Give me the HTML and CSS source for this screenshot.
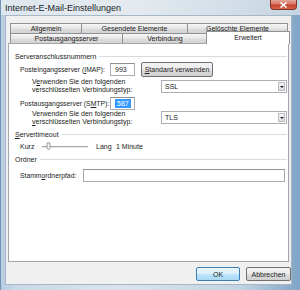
FILE: index.html
```html
<!DOCTYPE html>
<html lang="de">
<head>
  <meta charset="UTF-8">
  <title>Internet-E-Mail-Einstellungen</title>
  <link rel="stylesheet" href="styles.css">
</head>
<body>
  <div class="window">
    <div class="titlebar">
      <span class="title">Internet-E-Mail-Einstellungen</span>
      <span class="close">
        <svg width="9" height="6" viewBox="0 0 9 6"><path d="M1.5 0.5 L7.5 5.5 M7.5 0.5 L1.5 5.5" stroke="#fff" stroke-width="1.6"/></svg>
      </span>
    </div>

    <div class="client">
      <div class="tabs">
        <div class="tabrow">
          <div class="tab t-allg">Allgemein</div>
          <div class="tab t-ges">Gesendete Elemente</div>
          <div class="tab t-gel">Gelöschte Elemente</div>
        </div>
        <div class="tabrow">
          <div class="tab t-post">Postausgangsserver</div>
          <div class="tab t-verb">Verbindung</div>
          <div class="tab t-erw active">Erweitert</div>
        </div>
      </div>

      <div class="panel">
        <div class="group">Serveranschlussnummern</div>

        <div class="row r-imap">
          <span class="lbl">Posteingangsserver (<u>I</u>MAP):</span>
          <span class="field port">993</span>
          <span class="btn std"><u>S</u>tandard verwenden</span>
        </div>

        <div class="row r-enc r-enc1">
          <span class="enc-text">V<u>e</u>rwenden Sie den folgenden<br>verschlüsselten Verbindungstyp:</span>
          <span class="combo">SSL<span class="drop"></span></span>
        </div>

        <div class="row r-smtp">
          <span class="lbl">Postausgangsserver (S<u>M</u>TP):</span>
          <span class="field port"><span class="sel">587</span></span>
        </div>

        <div class="row r-enc r-enc2">
          <span class="enc-text">Verwenden Sie den folgenden<br><u>v</u>erschlüsselten Verbindungstyp:</span>
          <span class="combo">TLS<span class="drop"></span></span>
        </div>

        <div class="group g-timeout"><span><u>S</u>ervertimeout</span></div>

        <div class="row r-timeout">
          <span class="kurz">Kurz</span>
          <svg class="slider" width="46" height="9" viewBox="0 0 46 9">
            <rect x="0" y="4" width="46" height="1" fill="#a8a8a8"/>
            <rect x="0" y="5" width="46" height="1" fill="#e8e8e8"/>
            <path d="M5 1 L8 1 L8 6 L6.5 8 L5 6 Z" fill="#f4f4f4" stroke="#8a8a8a" stroke-width="0.8"/>
          </svg>
          <span class="lang">Lang</span>
          <span>1 Minute</span>
        </div>

        <div class="group g-ordner">Ordner</div>

        <div class="row r-stamm">
          <span class="lbl stamm-lbl">Stamm<u>o</u>rdnerpfad:</span>
          <span class="field path"></span>
        </div>
      </div>

      <div class="buttons">
        <span class="btn ok">OK</span>
        <span class="btn cancel">Abbrechen</span>
      </div>
    </div>
  </div>
</body>
</html>
```

FILE: styles.css
```css
body { margin: 0; font-family: "Liberation Sans", Arial, sans-serif; font-size: 7px; color: #1b1b1b; white-space: nowrap; }
u { text-decoration: underline; text-underline-offset: 1px; }

.window { width: 300px; height: 290px; display: flex; flex-direction: column; box-sizing: border-box; border-left: 1px solid #6f93b6; background: linear-gradient(to right, #b7cde0 0, #c9d9e7 5%, #dbe4ec 40%, #c3d4e3 80%, #7fa4c5 100%); }

/* title bar */
.titlebar { height: 15px; display: flex; align-items: flex-start; background: linear-gradient(to right, #dfe7ee 0, #e4eaef 45%, #c6d5e2 100%); }
.title { padding-left: 4px; line-height: 16px; font-size: 9px; color: #202428; }
.close { margin-left: auto; margin-right: 3px; width: 27px; height: 10px; box-sizing: border-box; display: flex; align-items: center; justify-content: center; border: 1px solid #7a3429; border-top: none; border-radius: 0 0 4px 4px; background: linear-gradient(#e3a596 0, #d77664 45%, #c4412a 55%, #d8664c 100%); }

/* client area */
.client { margin: 0 8px 5px 4px; flex: 1; display: flex; flex-direction: column; background: #f0f0f0; border: 1px solid #a5b6c6; }

.tabs { margin: 7px 0 0 4px; }
.tabrow { display: flex; height: 10px; align-items: flex-end; }
.tab { box-sizing: border-box; height: 10px; line-height: 9px; text-align: center; border: 1px solid #8e9196; border-bottom: none; margin-left: -1px; background: linear-gradient(#f6f6f6, #e6e6e6 50%, #dcdcdc 51%, #d4d4d4); }
.t-allg, .t-post { margin-left: 0; }
.t-allg { width: 72px; }
.t-ges { width: 107px; }
.t-gel { width: 101px; }
.t-post { width: 113px; }
.t-verb { width: 86px; }
.tab.active { width: 84px; height: 13px; margin-left: -2px; margin-top: -2px; margin-bottom: -1px; line-height: 11px; background: #fff; position: relative; z-index: 1; }

.panel { margin: 0 2px; height: 219px; box-sizing: border-box; border: 1px solid #a3a6ab; background: #fff; padding: 8px 1px 0 6px; }

.group { display: flex; align-items: center; height: 9px; line-height: 9px; }
.group::after { content: ""; flex: 1; margin-left: 3px; border-top: 1px solid #d5dde3; }
.g-timeout { margin-top: 4px; }
.g-ordner { margin-top: 4px; }

.row { display: flex; align-items: center; padding-left: 5px; }
.lbl { width: 90px; font-size: 6.8px; }
.field { box-sizing: border-box; height: 13px; border: 1px solid #abadb3; border-top-color: #8e9095; background: #fff; display: flex; align-items: center; padding-left: 4px; }
.port { width: 25px; }
.sel { background: #3399ff; color: #fff; padding: 0 2px; line-height: 9px; }

.btn { box-sizing: border-box; display: flex; align-items: center; justify-content: center; border: 1px solid #707070; border-radius: 2px; background: linear-gradient(#f3f3f3, #ebebeb 50%, #dddddd 51%, #cfcfcf); }
.std { width: 72px; height: 15px; margin-left: 6px; }

.r-imap { margin-top: 1px; }
.r-enc { align-items: flex-start; }
.enc-text { margin-left: 12px; line-height: 8px; }
.r-enc1 { margin-top: 1px; }
.r-enc1 .combo { margin-top: 2px; }
.r-enc2 .combo { margin-top: 1px; }
.r-smtp { margin-top: 3px; height: 13px; }

.combo { margin-left: auto; width: 126px; height: 13px; box-sizing: border-box; border: 1px solid #abadb3; display: flex; align-items: center; padding-left: 3px; background: #fff; }
.drop { margin-left: auto; margin-right: 1px; width: 7px; height: 9px; box-sizing: border-box; border: 1px solid #b9bcc2; background: linear-gradient(#f5f5f5, #dcdcdc); display: flex; align-items: center; justify-content: center; }
.drop::after { content: ""; border-left: 2px solid transparent; border-right: 2px solid transparent; border-top: 2px solid #222; }

.r-timeout { margin-top: 3px; height: 9px; }
.kurz { width: 22px; }
.lang { margin-left: 8px; width: 20px; }

.r-stamm { margin-top: 5px; }
.stamm-lbl { width: 63px; }
.path { width: 202px; }

.buttons { display: flex; justify-content: flex-end; gap: 6px; margin-top: 5px; }
.buttons .btn { height: 14px; }
.ok { width: 44px; border-color: #3c7fb1; background: linear-gradient(#eaf6fd, #d9f0fc 50%, #bee6fd 51%, #a7d9f5); }
.cancel { width: 45px; }
```
